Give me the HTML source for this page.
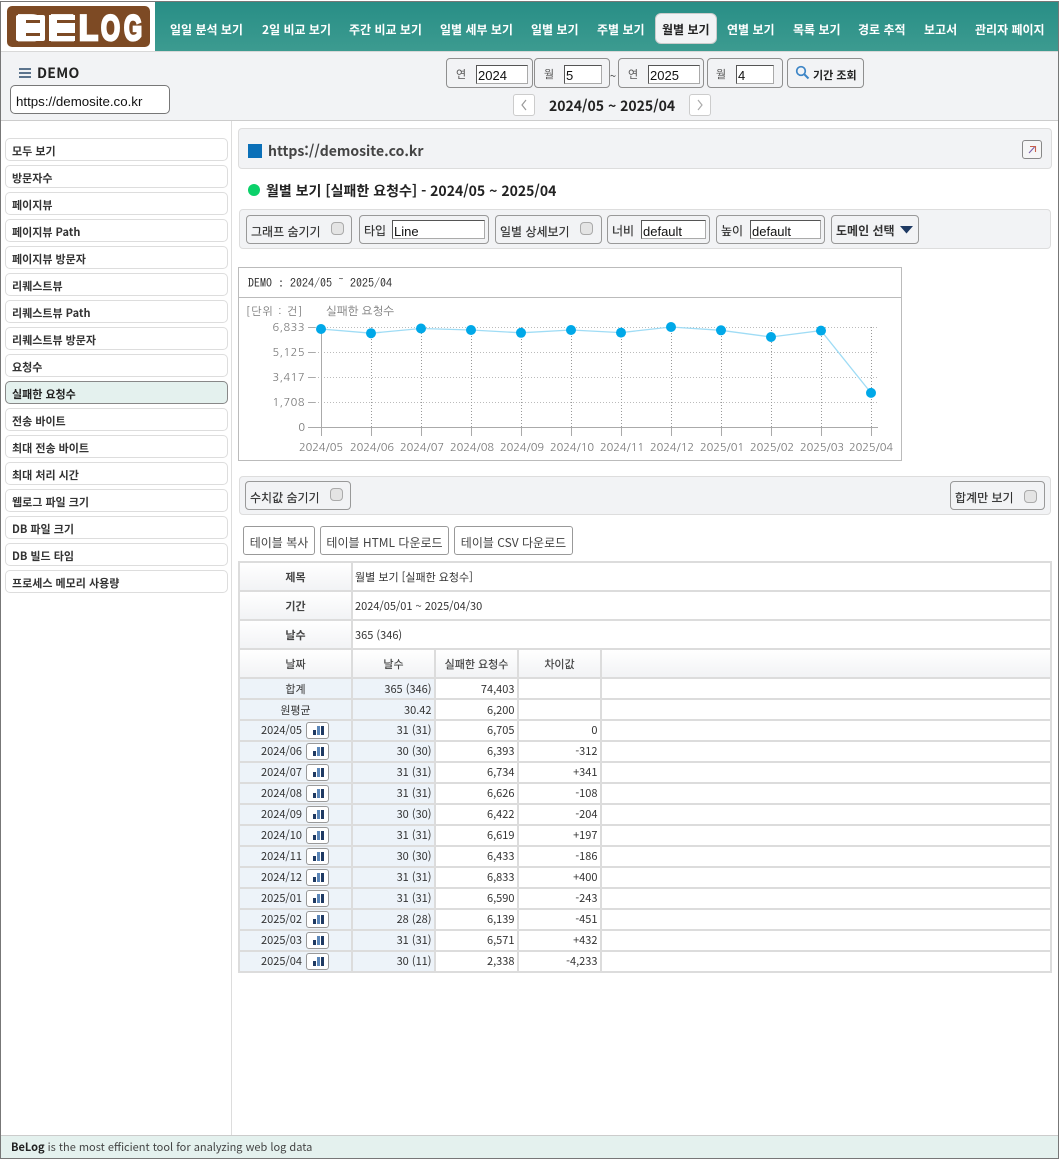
<!DOCTYPE html>
<html lang="ko"><head><meta charset="utf-8"><title>BeLog</title>
<style>
*{box-sizing:border-box}
html,body{margin:0;padding:0;background:#fff}
body{width:1060px;height:1160px;position:relative;overflow:hidden;font-family:"Noto Sans CJK KR","Liberation Sans",sans-serif;color:#333}
.a{position:absolute;white-space:nowrap}
#frame{position:absolute;left:0;top:1px;width:1059px;height:1158px;border:1px solid #777;pointer-events:none;z-index:9}
.nav{position:absolute;top:21px;line-height:18px;font-size:12px;font-weight:700;color:#fff;white-space:nowrap}
.box{position:absolute;background:#f2f3f5;border:1px solid #8f8f8f;border-radius:4px}
.inp{position:absolute;background:#fff;border:1px solid;border-color:#555 #aaa #aaa #555;font:13px/20px "Liberation Sans",sans-serif;color:#111;padding-left:1px;white-space:nowrap;overflow:hidden}
.lb{position:absolute;font-size:11px;color:#555;white-space:nowrap;line-height:16px}
.side{position:absolute;left:5px;width:223px;height:23px;border:1px solid #ddd;border-radius:5px;background:#fff;font-size:11px;font-weight:700;color:#333;padding-left:6px;line-height:25px;white-space:nowrap}
.tb{position:absolute;background:#f2f3f5;border:1px solid #ddd;border-radius:4px}
.ctl{position:absolute;height:29px;background:#f2f3f5;border:1px solid #999;border-radius:4px}
.t{position:absolute;white-space:nowrap;font-size:12px;line-height:18px;color:#333;text-shadow:0 0 .4px #333}
.cb{position:absolute;width:13px;height:13px;background:#e4e4e4;border:1px solid #aaa;border-radius:4px}
.btn{position:absolute;top:526px;height:29px;background:#fff;border:1px solid #999;border-radius:3px;font-size:12px;line-height:31px;text-align:center;color:#444;white-space:nowrap}
table{position:absolute;left:238px;top:561px;width:814px;border-collapse:collapse;table-layout:fixed;font-size:11px;color:#333}
td,th{border:2px solid #dcdcdc;padding:0 2.5px;height:21px;line-height:15px;white-space:nowrap;font-weight:400;overflow:hidden}
tr.h td,tr.h th{height:29px;padding-top:2px}
tr.p td{padding-top:2px}
th{background:linear-gradient(#fff,#f2f3f5);font-weight:700;text-align:center;color:#444}
th.n{font-weight:400;text-shadow:0 0 .4px #444}
td.l{text-align:left;padding-left:2px}
td.d{position:relative;background:#edf3f9;text-align:center}
td.dd{position:relative;background:#edf3f9;text-align:left;padding-left:21px}
td.s{background:#edf3f9;text-align:right}
td.r{text-align:right}
.ic{position:absolute;left:66px;top:1px;width:23px;height:17px;background:#fff;border:1px solid #999;border-radius:3px}
.ic i{position:absolute;bottom:3px;width:3px}
.ic i:nth-child(1){left:6px;height:5px;background:#1f3a63}
.ic i:nth-child(2){left:10px;height:9px;background:#5b86b8}
.ic i:nth-child(3){left:14px;height:9px;background:#1f3a63}
</style></head><body>
<div id="frame"></div>

<!-- header -->
<div class="a" style="left:155px;top:2px;width:904px;height:49px;background:linear-gradient(#288e86,#3c9b90)"></div>
<svg class="a" style="left:7px;top:6px" width="143" height="42" viewBox="0 0 143 42"><rect width="143" height="41" rx="5" fill="#7d4a24"/>
<rect x="9" y="9" width="29" height="26" rx="2" fill="#fff"/><rect x="42" y="9" width="26" height="26" fill="#fff"/>
<g font-family="Liberation Sans" font-weight="700" font-size="35" fill="#fff" stroke="#fff" stroke-width="2.800"><text x="10" y="34" textLength="27" lengthAdjust="spacingAndGlyphs">B</text><text x="43" y="34" textLength="24" lengthAdjust="spacingAndGlyphs">E</text><text x="72" y="34" textLength="19" lengthAdjust="spacingAndGlyphs">L</text><text x="94" y="34" textLength="19" lengthAdjust="spacingAndGlyphs">O</text><text x="117" y="34" textLength="18" lengthAdjust="spacingAndGlyphs">G</text></g>
<rect x="19" y="14" width="14" height="3" fill="#7d4a24"/><rect x="19" y="27" width="14" height="3" fill="#7d4a24"/><rect x="50" y="14" width="20" height="3" fill="#7d4a24"/><rect x="50" y="27" width="20" height="3" fill="#7d4a24"/></svg>
<div class="nav" style="left:170px">일일 분석 보기</div>
<div class="nav" style="left:262px">2일 비교 보기</div>
<div class="nav" style="left:349px">주간 비교 보기</div>
<div class="nav" style="left:440px">일별 세부 보기</div>
<div class="nav" style="left:531px">일별 보기</div>
<div class="nav" style="left:597px">주별 보기</div>
<div class="a" style="left:655px;top:13px;width:62px;height:31px;background:#f2f3f5;border:1px solid #ccc;border-radius:6px"></div>
<div class="nav" style="left:662px;color:#222">월별 보기</div>
<div class="nav" style="left:727px">연별 보기</div>
<div class="nav" style="left:793px">목록 보기</div>
<div class="nav" style="left:858px">경로 추적</div>
<div class="nav" style="left:924px">보고서</div>
<div class="nav" style="left:975px">관리자 페이지</div>

<!-- sub header -->
<div class="a" style="left:1px;top:51px;width:1058px;height:70px;background:#f2f3f5;border-bottom:1px solid #ccc;border-top:1px solid #d8d8d8"></div>
<svg class="a" style="left:19px;top:67px" width="13" height="12"><path d="M0 2h12M0 6h12M0 10h12" stroke="#2b4a6b" stroke-width="1.6"/></svg>
<div class="a" style="left:37px;top:63px;font-size:14px;font-weight:700;line-height:20px;color:#222;letter-spacing:.3px">DEMO</div>
<div class="a" style="left:10px;top:85px;width:160px;height:29px;background:#fff;border:1px solid #777;border-radius:5px;font:13.300px/31px 'Liberation Sans',sans-serif;padding-left:5px;color:#111">https://demosite.co.kr</div>

<div class="box" style="left:446px;top:58px;width:87px;height:30px"></div><div class="lb" style="left:456px;top:66px">연</div><div class="inp" style="left:476px;top:65px;width:52px;height:19px">2024</div>
<div class="box" style="left:534px;top:58px;width:76px;height:30px"></div><div class="lb" style="left:544px;top:66px">월</div><div class="inp" style="left:564px;top:65px;width:38px;height:19px">5</div>
<div class="a" style="left:610px;top:68px;font-size:11px;line-height:16px">~</div>
<div class="box" style="left:618px;top:58px;width:86px;height:30px"></div><div class="lb" style="left:628px;top:66px">연</div><div class="inp" style="left:648px;top:65px;width:52px;height:19px">2025</div>
<div class="box" style="left:707px;top:58px;width:76px;height:30px"></div><div class="lb" style="left:716px;top:66px">월</div><div class="inp" style="left:736px;top:65px;width:38px;height:19px">4</div>
<div class="box" style="left:787px;top:58px;width:77px;height:30px"></div>
<svg class="a" style="left:795px;top:65px" width="15" height="15"><circle cx="6" cy="6" r="4.3" fill="none" stroke="#3d85c6" stroke-width="1.7"/><path d="M9 9l4.5 4.5" stroke="#3d85c6" stroke-width="2"/></svg>
<div class="a" style="left:813px;top:66px;font-size:11px;font-weight:700;line-height:18px;color:#222">기간 조회</div>

<div class="a" style="left:513px;top:94px;width:22px;height:22px;background:#fff;border:1px solid #ccc;border-radius:3px"></div>
<svg class="a" style="left:513px;top:94px" width="22" height="22"><path d="M13 6l-4 5 4 5" fill="none" stroke="#999" stroke-width="1.2"/></svg>
<div class="a" style="left:549px;top:96px;font-size:14px;font-weight:700;line-height:21px;color:#222">2024/05 ~ 2025/04</div>
<div class="a" style="left:689px;top:94px;width:22px;height:22px;background:#fff;border:1px solid #ccc;border-radius:3px"></div>
<svg class="a" style="left:689px;top:94px" width="22" height="22"><path d="M9 6l4 5-4 5" fill="none" stroke="#aaa" stroke-width="1.2"/></svg>

<!-- sidebar -->
<div class="a" style="left:231px;top:121px;width:1px;height:1014px;background:#ddd"></div>
<div class="side" style="top:138px">모두 보기</div>
<div class="side" style="top:165px">방문자수</div>
<div class="side" style="top:192px">페이지뷰</div>
<div class="side" style="top:219px">페이지뷰 Path</div>
<div class="side" style="top:246px">페이지뷰 방문자</div>
<div class="side" style="top:273px">리퀘스트뷰</div>
<div class="side" style="top:300px">리퀘스트뷰 Path</div>
<div class="side" style="top:327px">리퀘스트뷰 방문자</div>
<div class="side" style="top:354px">요청수</div>
<div class="side" style="top:381px;background:#e4f1ee;border-color:#888;color:#222">실패한 요청수</div>
<div class="side" style="top:408px">전송 바이트</div>
<div class="side" style="top:435px">최대 전송 바이트</div>
<div class="side" style="top:462px">최대 처리 시간</div>
<div class="side" style="top:489px">웹로그 파일 크기</div>
<div class="side" style="top:516px">DB 파일 크기</div>
<div class="side" style="top:543px">DB 빌드 타임</div>
<div class="side" style="top:570px">프로세스 메모리 사용량</div>

<!-- title -->
<div class="tb" style="left:238px;top:128px;width:814px;height:41px"></div>
<div class="a" style="left:248px;top:144px;width:14px;height:14px;background:#0b70b8"></div>
<div class="a" style="left:268px;top:140px;font-size:14px;font-weight:700;line-height:22px;color:#444">https://demosite.co.kr</div>
<div class="a" style="left:1022px;top:140px;width:20px;height:19px;background:#f6f6f6;border:1px solid #888;border-radius:3px"></div>
<svg class="a" style="left:1022px;top:140px" width="20" height="19"><path d="M7 13l5.500-6" stroke="#7a5ea8" stroke-width="1.1"/><path d="M8 6.500h5.500v5.500" fill="none" stroke="#c9604a" stroke-width="1.1"/></svg>
<div class="a" style="left:248px;top:184px;width:12px;height:12px;border-radius:50%;background:#0bd16a"></div>
<div class="a" style="left:266px;top:181px;font-size:14px;font-weight:700;line-height:21px;color:#222">월별 보기 [실패한 요청수] - 2024/05 ~ 2025/04</div>

<!-- toolbar 1 -->
<div class="tb" style="left:239px;top:209px;width:812px;height:40px"></div>
<div class="ctl" style="left:246px;top:215px;width:106px"></div><div class="t" style="left:251px;top:223px">그래프 숨기기</div><div class="cb" style="left:331px;top:222px"></div>
<div class="ctl" style="left:359px;top:215px;width:130px"></div><div class="t" style="left:364px;top:222px">타입</div><div class="inp" style="left:392px;top:220px;width:93px;height:19px;line-height:21px">Line</div>
<div class="ctl" style="left:495px;top:215px;width:107px"></div><div class="t" style="left:500px;top:223px">일별 상세보기</div><div class="cb" style="left:580px;top:222px"></div>
<div class="ctl" style="left:607px;top:215px;width:103px"></div><div class="t" style="left:612px;top:222px">너비</div><div class="inp" style="left:641px;top:220px;width:65px;height:19px;line-height:21px">default</div>
<div class="ctl" style="left:716px;top:215px;width:109px"></div><div class="t" style="left:721px;top:222px">높이</div><div class="inp" style="left:750px;top:220px;width:71px;height:19px;line-height:21px">default</div>
<div class="ctl" style="left:831px;top:215px;width:88px"></div><div class="t" style="left:836px;top:222px;font-weight:700;font-size:12px;text-shadow:none">도메인 선택</div>
<svg class="a" style="left:900px;top:226px" width="13" height="8"><path d="M0 0h13L6.500 7.500z" fill="#1f3a63"/></svg>

<!-- chart -->
<div class="a" style="left:238px;top:267px;width:664px;height:194px;background:#fff;border:1px solid #bbb"></div>
<div class="a" style="left:239px;top:297px;width:662px;height:1px;background:#bbb"></div>
<svg class="a" style="left:238px;top:267px" width="664" height="194" viewBox="238 267 664 194">
<g font-family="IPAGothic,NanumGothic,'Liberation Mono',monospace" font-size="12" fill="#333"><text x="248" y="287" font-size="12">DEMO : 2024/05 ~ 2025/04</text></g>
<g font-family="NanumGothic,'Noto Sans CJK KR',sans-serif" font-size="11" fill="#777">
<text x="246" y="315" letter-spacing="1.100">[단위 : 건]</text><text x="326" y="315" font-size="11.500">실패한 요청수</text></g>
<g fill="none" stroke="#bbb" stroke-dasharray="1 2">
<path d="M315 327.500H877M315 352.500H877M315 377.500H877M315 402.500H877"/>
<path d="M371.500 327V427M421.500 327V427M471.500 327V427M521.500 327V427M571.500 327V427M621.500 327V427M671.500 327V427M721.500 327V427M771.500 327V427M821.500 327V427M871.500 327V427" stroke="#999"/>
</g>
<g fill="none" stroke="#aaa"><path d="M308 427.500H878M321.500 327V436M371.500 427V436M421.500 427V436M471.500 427V436M521.500 427V436M571.500 427V436M621.500 427V436M671.500 427V436M721.500 427V436M771.500 427V436M821.500 427V436M871.500 427V436M308 327.500h7M308 352.500h7M308 377.500h7M308 402.500h7"/></g>
<polyline points="321,329 371,333.200 421,328.500 471,330 521,332.800 571,330 621,332.600 671,327 721,330.300 771,337 821,330.600 871,392.900" fill="none" stroke="#9fdcf5" stroke-width="1.3"/>
<g fill="#00a8e8"><circle cx="321" cy="329" r="5"/><circle cx="371" cy="333.200" r="5"/><circle cx="421" cy="328.500" r="5"/><circle cx="471" cy="330" r="5"/><circle cx="521" cy="332.800" r="5"/><circle cx="571" cy="330" r="5"/><circle cx="621" cy="332.600" r="5"/><circle cx="671" cy="327" r="5"/><circle cx="721" cy="330.300" r="5"/><circle cx="771" cy="337" r="5"/><circle cx="821" cy="330.600" r="5"/><circle cx="871" cy="392.900" r="5"/></g>
<g font-family="NanumGothic,'Liberation Sans',sans-serif" font-size="11" fill="#777" text-anchor="end"><text x="305" y="331" letter-spacing=".5">6,833</text><text x="305" y="356" letter-spacing=".5">5,125</text><text x="305" y="381" letter-spacing=".5">3,417</text><text x="305" y="406" letter-spacing=".5">1,708</text><text x="305" y="431">0</text></g>
<g font-family="NanumGothic,'Liberation Sans',sans-serif" font-size="11" fill="#777" text-anchor="middle"><text x="321" y="451">2024/05</text><text x="372" y="451">2024/06</text><text x="422" y="451">2024/07</text><text x="472" y="451">2024/08</text><text x="522" y="451">2024/09</text><text x="572" y="451">2024/10</text><text x="622" y="451">2024/11</text><text x="672" y="451">2024/12</text><text x="722" y="451">2025/01</text><text x="772" y="451">2025/02</text><text x="822" y="451">2025/03</text><text x="871" y="451">2025/04</text></g>
</svg>

<!-- toolbar 2 -->
<div class="tb" style="left:239px;top:476px;width:812px;height:39px"></div>
<div class="ctl" style="left:245px;top:481px;width:106px"></div><div class="t" style="left:250px;top:489px">수치값 숨기기</div><div class="cb" style="left:330px;top:488px"></div>
<div class="ctl" style="left:950px;top:481px;width:95px"></div><div class="t" style="left:955px;top:489px">합계만 보기</div><div class="cb" style="left:1024px;top:490px"></div>

<div class="btn" style="left:243px;width:72px">테이블 복사</div>
<div class="btn" style="left:320px;width:129px">테이블 HTML 다운로드</div>
<div class="btn" style="left:454px;width:119px">테이블 CSV 다운로드</div>

<table>
<colgroup><col style="width:113px"><col style="width:83px"><col style="width:83px"><col style="width:83px"><col></colgroup>
<tr class="h"><th>제목</th><td colspan="4" class="l">월별 보기 [실패한 요청수]</td></tr>
<tr class="h"><th>기간</th><td colspan="4" class="l">2024/05/01 ~ 2025/04/30</td></tr>
<tr class="h"><th>날수</th><td colspan="4" class="l">365 (346)</td></tr>
<tr class="h"><th class="n">날짜</th><th class="n">날수</th><th class="n">실패한 요청수</th><th class="n">차이값</th><th></th></tr>
<tr class="p"><td class="d">합계</td><td class="s">365 (346)</td><td class="r">74,403</td><td class="r"></td><td></td></tr>
<tr class="p"><td class="d">원평균</td><td class="s">30.42</td><td class="r">6,200</td><td class="r"></td><td></td></tr>
<tr><td class="dd">2024/05<span class="ic"><i></i><i></i><i></i></span></td><td class="s">31 (31)</td><td class="r">6,705</td><td class="r">0</td><td></td></tr>
<tr><td class="dd">2024/06<span class="ic"><i></i><i></i><i></i></span></td><td class="s">30 (30)</td><td class="r">6,393</td><td class="r">-312</td><td></td></tr>
<tr><td class="dd">2024/07<span class="ic"><i></i><i></i><i></i></span></td><td class="s">31 (31)</td><td class="r">6,734</td><td class="r">+341</td><td></td></tr>
<tr><td class="dd">2024/08<span class="ic"><i></i><i></i><i></i></span></td><td class="s">31 (31)</td><td class="r">6,626</td><td class="r">-108</td><td></td></tr>
<tr><td class="dd">2024/09<span class="ic"><i></i><i></i><i></i></span></td><td class="s">30 (30)</td><td class="r">6,422</td><td class="r">-204</td><td></td></tr>
<tr><td class="dd">2024/10<span class="ic"><i></i><i></i><i></i></span></td><td class="s">31 (31)</td><td class="r">6,619</td><td class="r">+197</td><td></td></tr>
<tr><td class="dd">2024/11<span class="ic"><i></i><i></i><i></i></span></td><td class="s">30 (30)</td><td class="r">6,433</td><td class="r">-186</td><td></td></tr>
<tr><td class="dd">2024/12<span class="ic"><i></i><i></i><i></i></span></td><td class="s">31 (31)</td><td class="r">6,833</td><td class="r">+400</td><td></td></tr>
<tr><td class="dd">2025/01<span class="ic"><i></i><i></i><i></i></span></td><td class="s">31 (31)</td><td class="r">6,590</td><td class="r">-243</td><td></td></tr>
<tr><td class="dd">2025/02<span class="ic"><i></i><i></i><i></i></span></td><td class="s">28 (28)</td><td class="r">6,139</td><td class="r">-451</td><td></td></tr>
<tr><td class="dd">2025/03<span class="ic"><i></i><i></i><i></i></span></td><td class="s">31 (31)</td><td class="r">6,571</td><td class="r">+432</td><td></td></tr>
<tr><td class="dd">2025/04<span class="ic"><i></i><i></i><i></i></span></td><td class="s">30 (11)</td><td class="r">2,338</td><td class="r">-4,233</td><td></td></tr>
</table>

<!-- footer -->
<div class="a" style="left:1px;top:1135px;width:1058px;height:23px;background:#e4f1ee;border-top:1px solid #ccc;font-size:11px;line-height:22px;padding-left:10px;color:#444"><b style="color:#222">BeLog</b> is the most efficient tool for analyzing web log data</div>
</body></html>
